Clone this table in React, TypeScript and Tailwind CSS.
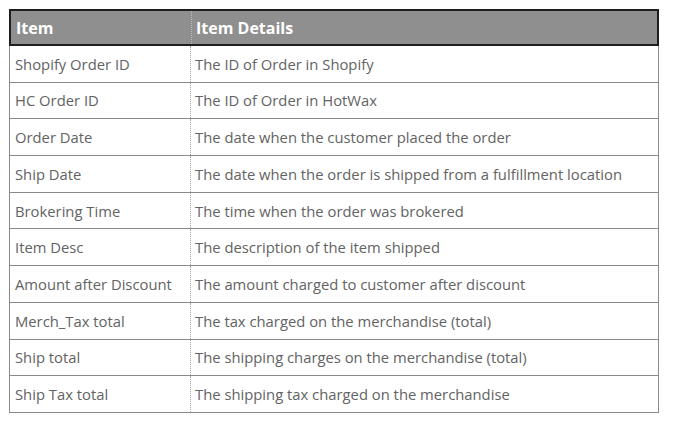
const rows: [string, string][] = [
  ["Shopify Order ID", "The ID of Order in Shopify"],
  ["HC Order ID", "The ID of Order in HotWax"],
  ["Order Date", "The date when the customer placed the order"],
  ["Ship Date", "The date when the order is shipped from a fulfillment location"],
  ["Brokering Time", "The time when the order was brokered"],
  ["Item Desc", "The description of the item shipped"],
  ["Amount after Discount", "The amount charged to customer after discount"],
  ["Merch_Tax total", "The tax charged on the merchandise (total)"],
  ["Ship total", "The shipping charges on the merchandise (total)"],
  ["Ship Tax total", "The shipping tax charged on the merchandise"],
];

export default function App() {
  return (
    <div
      className="w-[674px] h-[427px] bg-white pt-[9px] pl-[9px]"
      style={{ fontFamily: '"Open Sans", sans-serif' }}
    >
      <div className="w-[650px] flex flex-col">
        {/* header */}
        <div className="h-[37px] flex bg-[#8f8f8f] border-2 border-[#1e1e1e] text-white font-bold text-[16px]">
          <div className="w-[181px] pl-[5px] flex items-center border-r border-dotted border-[#bdbdbd]">
            Item
          </div>
          <div className="flex-1 pl-[4px] flex items-center">Item Details</div>
        </div>
        {/* body */}
        <div className="border-x border-[#8a8a8a] flex flex-col">
          {rows.map(([item, details]) => (
            <div
              key={item}
              className="h-[36.7px] flex border-b border-[#8a8a8a] text-[14.8px] text-[#636363]"
            >
              <div className="w-[181px] pl-[5px] flex items-center border-r border-dotted border-[#a8a8a8] whitespace-nowrap">
                {item}
              </div>
              <div className="flex-1 pl-[4px] flex items-center whitespace-nowrap">
                {details}
              </div>
            </div>
          ))}
        </div>
      </div>
    </div>
  );
}
